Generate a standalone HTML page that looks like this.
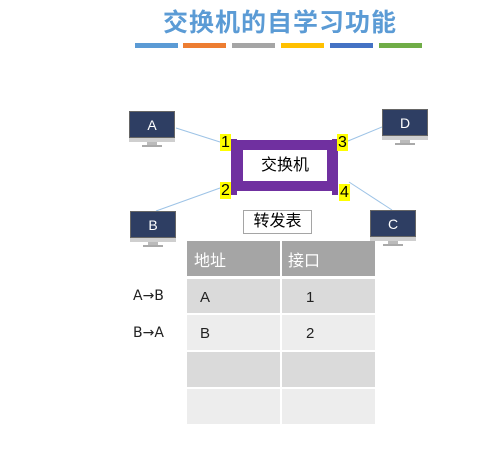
<!DOCTYPE html><html><head><meta charset="utf-8"><style>
body{margin:0;width:491px;height:449px;background:#fff;position:relative;overflow:hidden;font-family:"Liberation Sans","Noto Sans CJK SC",sans-serif}
.a{position:absolute}
.t{left:163px;top:3px;white-space:nowrap;font-size:25px;color:#5b9bd5;letter-spacing:1px;font-weight:bold}
.bar{top:43px;height:5px;width:43px}
.pc{width:46px}
.scr{position:absolute;left:0;top:0;width:46px;height:27px;background:#2e3e63;border:1px solid #666;box-sizing:border-box;color:#fff;font-size:14px;text-align:center;line-height:26px}
.base{position:absolute;left:0;top:27px;width:46px;height:4px;background:#cfcfcf}
.neck{position:absolute;left:18px;top:31px;width:10px;height:3px;background:#bbb}
.foot{position:absolute;left:13px;top:34px;width:20px;height:2px;background:#aaa}
.n{background:#ff0;font-size:16px;width:11px;height:17px;line-height:17px;text-align:center}
.cell{position:absolute;font-size:15px;color:#222}
</style></head><body>
<div class="a t">交换机的自学习功能</div>
<div class="a bar" style="left:135px;background:#5b9bd5"></div>
<div class="a bar" style="left:183px;background:#ed7d31"></div>
<div class="a bar" style="left:232px;background:#a5a5a5"></div>
<div class="a bar" style="left:281px;background:#ffc000"></div>
<div class="a bar" style="left:330px;background:#4472c4"></div>
<div class="a bar" style="left:379px;background:#70ad47"></div>
<svg class="a" style="left:0;top:0" width="491" height="449"><g stroke="#9dc3e6" stroke-width="1"><line x1="176" y1="128" x2="220" y2="142"/><line x1="382" y1="127" x2="348" y2="141"/><line x1="156" y1="211" x2="220" y2="188"/><line x1="392" y1="210" x2="349" y2="182"/></g>
<rect x="238" y="145" width="94" height="41" fill="#fff" stroke="#7030a0" stroke-width="10"/>
<rect x="231" y="139" width="6" height="56" fill="#7030a0"/><rect x="332" y="139" width="6" height="56" fill="#7030a0"/></svg>
<div class="a" style="left:243px;top:150px;width:84px;height:31px;line-height:31px;text-align:center;font-size:16px">交换机</div>
<div class="a pc" style="left:129px;top:111px"><div class="scr">A</div><div class="base"></div><div class="neck"></div><div class="foot"></div></div>
<div class="a pc" style="left:382px;top:109px"><div class="scr">D</div><div class="base"></div><div class="neck"></div><div class="foot"></div></div>
<div class="a pc" style="left:130px;top:211px"><div class="scr">B</div><div class="base"></div><div class="neck"></div><div class="foot"></div></div>
<div class="a pc" style="left:370px;top:210px"><div class="scr">C</div><div class="base"></div><div class="neck"></div><div class="foot"></div></div>
<div class="a n" style="left:220px;top:134px">1</div>
<div class="a n" style="left:337px;top:134px">3</div>
<div class="a n" style="left:220px;top:182px">2</div>
<div class="a n" style="left:339px;top:184px">4</div>
<div class="a" style="left:243px;top:210px;width:67px;height:22px;border:1px solid #a5a5a5;text-align:center;line-height:22px;font-size:16px">转发表</div>
<div class="a" style="left:187px;top:241px;width:93px;height:35px;background:#a5a5a5"></div>
<div class="a" style="left:282px;top:241px;width:93px;height:35px;background:#a5a5a5"></div>
<div class="cell" style="left:194px;top:247px;color:#fff;font-size:16px">地址</div>
<div class="cell" style="left:288px;top:247px;color:#fff;font-size:16px">接口</div>
<div class="a" style="left:187px;top:279px;width:93px;height:34px;background:#dadada"></div><div class="a" style="left:282px;top:279px;width:93px;height:34px;background:#dadada"></div>
<div class="a" style="left:187px;top:315px;width:93px;height:35px;background:#ededed"></div><div class="a" style="left:282px;top:315px;width:93px;height:35px;background:#ededed"></div>
<div class="a" style="left:187px;top:352px;width:93px;height:35px;background:#dadada"></div><div class="a" style="left:282px;top:352px;width:93px;height:35px;background:#dadada"></div>
<div class="a" style="left:187px;top:389px;width:93px;height:35px;background:#ededed"></div><div class="a" style="left:282px;top:389px;width:93px;height:35px;background:#ededed"></div>
<div class="cell" style="left:200px;top:289px">A</div><div class="cell" style="left:306px;top:289px">1</div>
<div class="cell" style="left:200px;top:325px">B</div><div class="cell" style="left:306px;top:325px">2</div>
<div class="cell" style="left:133px;top:288px;font-family:'DejaVu Sans',sans-serif;font-size:14px">A→B</div>
<div class="cell" style="left:133px;top:325px;font-family:'DejaVu Sans',sans-serif;font-size:14px">B→A</div>
</body></html>
